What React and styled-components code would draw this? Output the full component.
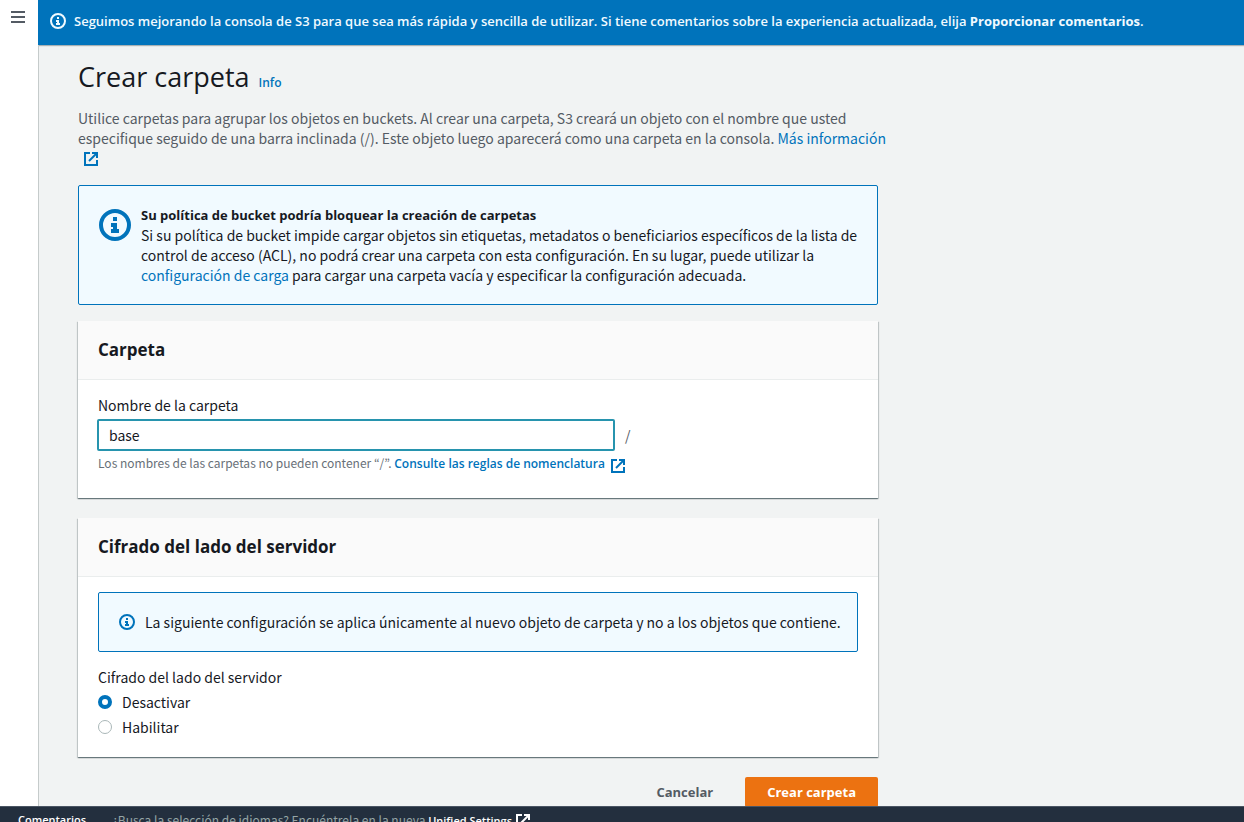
import React from "react";
import styled, { createGlobalStyle, css } from "styled-components";

const strongFont = `"Open Sans", "Noto Sans", sans-serif`;

const GlobalStyle = createGlobalStyle`
  *, *::before, *::after { box-sizing: border-box; }
  body {
    margin: 0;
    background: #f1f3f3;
    color: #16191f;
    font-family: "Noto Sans CJK KR", "Noto Sans", sans-serif;
    font-size: 14px;
    line-height: 20px;
  }
  h1, h2, h3, p, fieldset, legend { margin: 0; padding: 0; border: 0; }
  button, input { font: inherit; }
`;

const Shell = styled.div`
  display: flex;
  flex-direction: column;
  height: 100vh;
  overflow: hidden;
`;

const Body = styled.div`
  display: flex;
  flex: 1;
  min-height: 0;
`;

const SideRail = styled.nav`
  flex: none;
  width: 38px;
  background: #fff;
`;

const MenuButton = styled.button`
  display: block;
  padding: 11px;
  border: 0;
  background: none;
  color: #545b64;
  cursor: pointer;
  svg { display: block; }
`;

const Content = styled.div`
  display: flex;
  flex: 1;
  flex-direction: column;
  min-width: 0;
  overflow: hidden;
`;

const Flash = styled.div`
  display: flex;
  flex: none;
  align-items: center;
  gap: 8px;
  height: 45px;
  padding: 0 12px 3px;
  background: #0073bb;
  color: #f1faff;
  font-family: ${strongFont};
  font-size: 13px;
  font-weight: 600;
  white-space: nowrap;
  box-shadow: 0 1px 1px rgba(0, 28, 36, 0.3);
  svg { flex: none; }
  b { font-weight: 700; }
`;

const Scroll = styled.div`
  flex: 1;
  min-height: 0;
  overflow: hidden;
  border-left: 1px solid #c5cbcb;
`;

const Main = styled.main`
  max-width: 839px;
  padding: 16px 0 20px 39px;
`;

const TitleRow = styled.div`
  display: flex;
  align-items: baseline;
  gap: 9px;
`;

const Title = styled.h1`
  font-family: ${strongFont};
  font-size: 27px;
  line-height: 32px;
  font-weight: 400;
`;

const Link = styled.a`
  color: #0073bb;
  text-decoration: none;
  svg { vertical-align: -3px; margin-left: 5px; }
  ${(p) =>
    p.$small &&
    css`
      font-family: ${strongFont};
      font-size: 12px;
      font-weight: 600;
      svg { vertical-align: -6px; }
    `}
`;

const Intro = styled.p`
  margin: 15px -10px 0 0;
  color: #545b64;
`;

const Alert = styled.div`
  display: flex;
  align-items: flex-start;
  gap: 10px;
  margin-top: ${(p) => (p.$large ? "17px" : "0")};
  padding: 19px 10px 19px 20px;
  border: 1px solid #0073bb;
  border-radius: 2px;
  background: #f1faff;
`;

const AlertIcon = styled.span`
  display: flex;
  flex: none;
  margin-top: ${(p) => (p.$large ? "4px" : "2px")};
  color: #0073bb;
`;

const AlertTitle = styled.h3`
  font-family: ${strongFont};
  font-size: 13px;
  line-height: 20px;
  font-weight: 700;
`;

const Panel = styled.section`
  margin-top: ${(p) => (p.$first ? "16px" : "20px")};
  background: #fff;
  box-shadow: 0 1px 1px rgba(0, 28, 36, 0.4), 1px 1px 1px rgba(0, 28, 36, 0.15),
    -1px 1px 1px rgba(0, 28, 36, 0.15);
`;

const PanelHeader = styled.header`
  padding: 18px 20px;
  border-bottom: 1px solid #eaeded;
  background: #fafafa;
`;

const PanelTitle = styled.h2`
  font-family: ${strongFont};
  font-size: 17px;
  line-height: 22px;
  font-weight: 700;
`;

const PanelBody = styled.div`
  padding: 15px 20px 20px;
`;

const Label = styled.label`
  display: block;
`;

const InputRow = styled.div`
  display: flex;
  align-items: center;
  gap: 10px;
  margin: 4px 0 2px -1px;
  color: #545b64;
`;

const TextInput = styled.input`
  width: 518px;
  height: 32px;
  padding: 0 10px;
  border: 2px solid #2794ae;
  border-radius: 2px;
  background: #fff;
  color: #16191f;
  outline: 0;
`;

const Hint = styled.p`
  min-height: 25px;
  color: #687078;
  font-size: 12px;
`;

const RadioGroup = styled.fieldset`
  display: flex;
  flex-direction: column;
  gap: 5px;
  margin-top: 15px;
  legend { margin-bottom: 5px; }
`;

const RadioLabel = styled.label`
  display: flex;
  align-items: center;
  gap: 10px;
  height: 20px;
`;

const Radio = styled.input`
  appearance: none;
  width: 14px;
  height: 14px;
  margin: 0;
  border: 1px solid #aab7b8;
  border-radius: 50%;
  background: #fff;
  &:checked { border: 4px solid #0073bb; }
`;

const Actions = styled.div`
  display: flex;
  justify-content: flex-end;
  gap: 10px;
  margin-top: 20px;
`;

const Button = styled.button`
  height: 30px;
  padding: 0 22px;
  border: 0;
  border-radius: 2px;
  background: none;
  color: #545b64;
  font-family: ${strongFont};
  font-size: 13px;
  font-weight: 700;
  cursor: pointer;
  ${(p) =>
    p.$primary &&
    css`
      background: #ec7211;
      color: #fff;
    `}
`;

const Footer = styled.footer`
  display: flex;
  flex: none;
  gap: 26px;
  height: 16px;
  padding: 3px 18px 0;
  overflow: hidden;
  border-top: 1px solid #4a5563;
  background: #232f3e;
  color: #95a5a6;
  font-size: 12px;
  white-space: nowrap;
`;

const FooterButton = styled.button`
  height: 20px;
  padding: 0;
  border: 0;
  background: none;
  color: #fff;
  font-family: ${strongFont};
  font-size: 11px;
  font-weight: 600;
`;

const FooterLink = styled.a`
  color: #fff;
  font-family: ${strongFont};
  font-size: 11px;
  font-weight: 600;
  text-decoration: none;
  svg { margin-left: 3px; vertical-align: -4px; }
`;

const InfoIcon = ({ size = 16 }) => (
  <svg width={size} height={size} viewBox="0 0 16 16" fill="none" stroke="currentColor" strokeWidth="2" aria-hidden="true">
    <circle cx="8" cy="8" r="7" />
    <path d="M8 11V8H6M10 11H6" />
    <path d="M8 6V4" />
  </svg>
);

const ExternalIcon = () => (
  <svg width="16" height="16" viewBox="0 0 16 16" fill="none" stroke="currentColor" strokeWidth="2" aria-hidden="true">
    <path d="M9 2h5v5" />
    <path d="M6 10l8-8" />
    <path d="M14 9.05V14H2V2h5" />
  </svg>
);

const MenuIcon = () => (
  <svg width="14" height="12" viewBox="0 0 14 12" fill="currentColor" aria-hidden="true">
    <path d="M0 0h14v2H0zM0 5h14v2H0zM0 10h14v2H0z" />
  </svg>
);

export default function App() {
  return (
    <>
      <GlobalStyle />
      <Shell>
        <Body>
          <SideRail>
            <MenuButton type="button" aria-label="Menú">
              <MenuIcon />
            </MenuButton>
          </SideRail>
          <Content>
            <Flash>
              <InfoIcon />
              <span>
                Seguimos mejorando la consola de S3 para que sea más rápida y sencilla de utilizar. Si tiene
                comentarios sobre la experiencia actualizada, elija <b>Proporcionar comentarios</b>.
              </span>
            </Flash>
            <Scroll>
              <Main>
                <TitleRow>
                  <Title>Crear carpeta</Title>
                  <Link href="#info" $small>Info</Link>
                </TitleRow>
                <Intro>
                  Utilice carpetas para agrupar los objetos en buckets. Al crear una carpeta, S3 creará un objeto con
                  el nombre que usted especifique seguido de una barra inclinada (/). Este objeto luego aparecerá
                  como una carpeta en la consola.{" "}
                  <Link href="#more">Más información <ExternalIcon /></Link>
                </Intro>
                <Alert $large>
                  <AlertIcon $large><InfoIcon size={32} /></AlertIcon>
                  <div>
                    <AlertTitle>Su política de bucket podría bloquear la creación de carpetas</AlertTitle>
                    <p>
                      Si su política de bucket impide cargar objetos sin etiquetas, metadatos o beneficiarios
                      específicos de la lista de control de acceso (ACL), no podrá crear una carpeta con esta
                      configuración. En su lugar, puede utilizar la{" "}
                      <Link href="#upload">configuración de carga</Link> para cargar una carpeta vacía y especificar
                      la configuración adecuada.
                    </p>
                  </div>
                </Alert>
                <Panel $first>
                  <PanelHeader>
                    <PanelTitle>Carpeta</PanelTitle>
                  </PanelHeader>
                  <PanelBody>
                    <Label htmlFor="folder">Nombre de la carpeta</Label>
                    <InputRow>
                      <TextInput id="folder" type="text" defaultValue="base" />
                      <span>/</span>
                    </InputRow>
                    <Hint>
                      Los nombres de las carpetas no pueden contener “/”.{" "}
                      <Link href="#rules" $small>Consulte las reglas de nomenclatura<ExternalIcon /></Link>
                    </Hint>
                  </PanelBody>
                </Panel>
                <Panel>
                  <PanelHeader>
                    <PanelTitle>Cifrado del lado del servidor</PanelTitle>
                  </PanelHeader>
                  <PanelBody>
                    <Alert>
                      <AlertIcon><InfoIcon /></AlertIcon>
                      <p>
                        La siguiente configuración se aplica únicamente al nuevo objeto de carpeta y no a los objetos
                        que contiene.
                      </p>
                    </Alert>
                    <RadioGroup>
                      <legend>Cifrado del lado del servidor</legend>
                      <RadioLabel>
                        <Radio type="radio" name="sse" defaultChecked />
                        Desactivar
                      </RadioLabel>
                      <RadioLabel>
                        <Radio type="radio" name="sse" />
                        Habilitar
                      </RadioLabel>
                    </RadioGroup>
                  </PanelBody>
                </Panel>
                <Actions>
                  <Button type="button">Cancelar</Button>
                  <Button type="submit" $primary>Crear carpeta</Button>
                </Actions>
              </Main>
            </Scroll>
          </Content>
        </Body>
        <Footer>
          <FooterButton type="button">Comentarios</FooterButton>
          <span>
            ¿Busca la selección de idiomas? Encuéntrela en la nueva{" "}
            <FooterLink href="#settings">Unified Settings<ExternalIcon /></FooterLink>
          </span>
        </Footer>
      </Shell>
    </>
  );
}
